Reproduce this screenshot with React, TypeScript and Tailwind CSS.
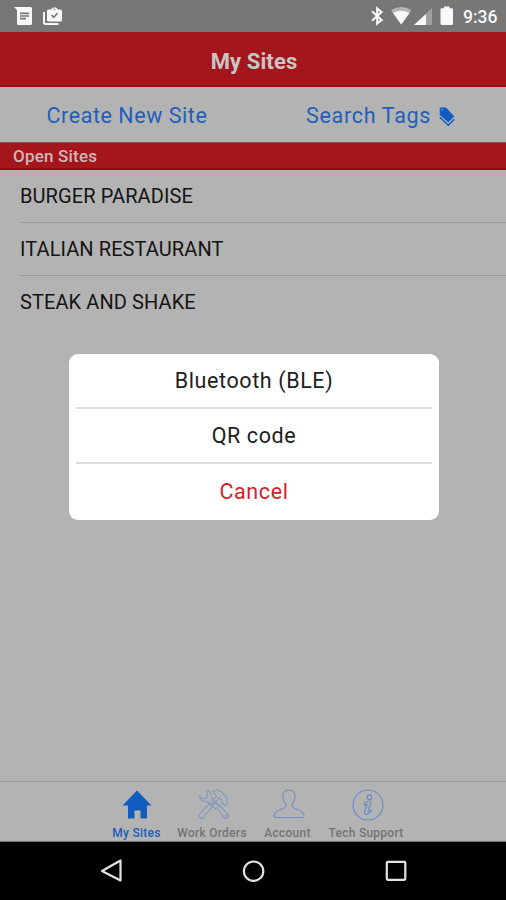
import React from "react";

const sites = ["BURGER PARADISE", "ITALIAN RESTAURANT", "STEAK AND SHAKE"];

function StatusBar() {
  return (
    <div className="flex h-8 shrink-0 items-start justify-between bg-[#777777] pl-[14px] pr-[8px] text-[#f8f8f8]">
      <div className="flex gap-[10px] pt-[6px]">
        <svg width="19" height="20" viewBox="0 0 19 20">
          <path fill="currentColor" d="M0 1h16.500q1.500 0 1.500 1.500v15q0 1.500-1.500 1.500H4.500Q3 19 3 17.500V4z" />
          <path stroke="#777" strokeWidth="1.700" d="M6 7.300h9M6 10h9M6 12.700h6" />
        </svg>
        <svg width="20" height="20" viewBox="0 0 20 20">
          <path fill="none" stroke="currentColor" strokeWidth="2" d="M1 6v10.500q0 1.500 1.500 1.500H15.500" />
          <path fill="currentColor" d="M4 5q0-1.500 1.500-1.500H8L10 1.500h3L15 3.500h2.500Q19 3.500 19 5v9q0 1.500-1.500 1.500h-12Q4 15.500 4 14z" />
          <path fill="none" stroke="#777" strokeWidth="1.500" d="m8.500 9 2.300 2.300 3.700-4.200" />
          <path fill="#777" d="M10.500 2.800h2v1h-2z" />
        </svg>
      </div>
      <div className="flex">
        <svg width="82" height="20" viewBox="0 0 82 20" className="mt-[6px]">
          <path fill="none" stroke="currentColor" strokeWidth="2.200" d="M1 5.300 10.500 14 6.200 17.400V2.600L10.500 6 1 14.700" />
          <path fill="#b4b4b4" d="M20 4q10.500-6 20.500 0L30.200 18.500z" />
          <path fill="currentColor" d="M22 7q8.300-4.500 16.500 0l-8.300 11.500z" />
          <path fill="#a0a0a0" d="M61 2v17H43z" />
          <path fill="currentColor" d="M55 8v11H43z" />
          <path fill="currentColor" d="M70.500 2.200H73V.5h5.500v1.700H81q1 0 1 1.200v14.400q0 1.200-1 1.200H70.700q-1.200 0-1.200-1.200V3.400q0-1.200 1-1.200z" />
        </svg>
        <span className="ml-[10px] mt-[6px] w-[35px] whitespace-nowrap text-[17.500px] font-medium leading-[22px]">9:36</span>
      </div>
    </div>
  );
}

function TagsIcon() {
  return (
    <svg width="16" height="20" viewBox="0 0 16 20" className="ml-[8px] mt-[1px]">
      <path fill="#125cc0" fillRule="evenodd" d="M.7.500h6.300L15.300 9.500l-6 6L.7 8zM3 2a.8.800 0 1 0 0 1.600.8.800 0 0 0 0-1.600z" />
      <path fill="none" stroke="#125cc0" strokeWidth="1.400" d="m.8 10.300 8.500 8 6-6" />
    </svg>
  );
}

function TabIcon({ name }: { name: string }) {
  if (name === "My Sites")
    return (
      <svg width="30" height="30" viewBox="0 0 30 30">
        <path fill="#125cc0" d="M15 .5 29.500 15.500H25v13h-6.500v-8h-6v8H6v-13H.5z" />
      </svg>
    );
  if (name === "Work Orders")
    return (
      <svg width="32" height="32" viewBox="0 0 32 32" fill="none" stroke="#8097c0" strokeWidth="1.100">
        <path d="M8 1.500c4 0 6 3 5 6.500l4 4.500-4 4-4.500-4.500C5 13 1.500 11 1.500 7l4 3 3.500-1 .5-3.500z" />
        <path d="m18.500 18 8 11q1 1 2.300 0l1.200-1.200q1-1.100 0-2.300l-9-9.500" />
        <path d="M15 2.500Q19-.5 23 2.500l6 6.500v6l-2 2-3-3v-3l-3-2L5 29q-1 1-2 0l-1.700-1.700q-1-1 0-2L18.500 7.500z" />
        <path d="m13.500 16.500 5 4M17 13l4 4M27 26l1.500 1.500" />
      </svg>
    );
  if (name === "Account")
    return (
      <svg width="32" height="30" viewBox="0 0 32 30" fill="none" stroke="#718fc4" strokeWidth="1.100">
        <path d="M16 1c-4.200 0-6.500 3-6.200 7 .2 4 2 5.500 3 7 .8 3-.8 4-4.800 5.200C3 22 1 23.500 1 27q0 1.500 1.500 1.500h27Q31 28.500 31 27c0-3.500-2-5-7-6.800-4-1.200-5.600-2.200-4.800-5.200 1-1.500 2.800-3 3-7 .3-4-2-7-6.200-7z" />
      </svg>
    );
  return (
    <svg width="32" height="32" viewBox="0 0 32 32" fill="none" stroke="#668bc5" strokeWidth="1.100">
      <circle cx="16" cy="16" r="15" />
      <circle cx="17.500" cy="8.200" r="2.300" />
      <path d="M12.200 14.500q3-3 5.800-2.500c1.500.500 1 2-.5 6l-1.500 4.500q2-.5 2.800-1.500l.5.800Q16.500 26 13.500 25.500c-2-.500-1-3 .2-6l1.500-4.300q-1.500.300-2.500 1.200z" />
    </svg>
  );
}

const tabs = [
  { name: "My Sites", box: "w-[48px] ml-[112.500px]", icon: "mt-[8px] h-[33px] pl-[1px]", text: "text-[#1c5dba]" },
  { name: "Work Orders", box: "w-[70px] ml-[16.500px]", icon: "mt-[7px] h-[34px] pl-[3px]", text: "text-[#747474]" },
  { name: "Account", box: "w-[47px] ml-[17px]", icon: "mt-[7px] h-[34px] pl-[2px]", text: "text-[#747474]" },
  { name: "Tech Support", box: "w-[76px] ml-[17px]", icon: "mt-[7px] h-[34px] pl-[3px]", text: "text-[#747474]" },
];

const options = [
  { label: "Bluetooth (BLE)", style: "h-[55px] border-b-2 text-[#202020]" },
  { label: "QR code", style: "h-[55px] border-b-2 text-[#202020]" },
  { label: "Cancel", style: "h-[56px] text-[#d4212b]" },
];

export default function App() {
  return (
    <div className="relative flex h-[900px] w-[506px] flex-col overflow-hidden bg-[#b3b3b3] font-['Roboto',sans-serif]">
      <StatusBar />
      <header className="flex h-[55px] shrink-0 items-center justify-center border-b-2 border-[#98060e] bg-[#a3161b] pt-[6px] text-[22px] font-bold tracking-[0.100px] text-[#cac5c5]">
        <h1 className="pl-[2px]">My Sites</h1>
      </header>
      <div className="flex h-[55px] shrink-0 text-[21.500px] leading-[28px] tracking-[0.550px] text-[#1f5fb9]">
        <button className="ml-[46.500px] mt-[15px] h-7 w-[162.500px] whitespace-nowrap text-left">Create New Site</button>
        <button className="ml-[97px] mt-[15px] flex h-7 items-center whitespace-nowrap tracking-[0.700px]">
          Search Tags
          <TagsIcon />
        </button>
      </div>
      <div className="h-[28px] shrink-0 border-b-2 border-t border-b-[#99060c] border-t-[#8f5558] bg-[#a3161b] pl-[13px] pt-[2px] text-[17px] font-medium leading-[22px] tracking-[0.200px] text-[#d0b6b7]">
        Open Sites
      </div>
      <ul className="flex-1 pl-5 text-[20px] tracking-[0.090px] text-[#141414]">
        {sites.map((site, i) => (
          <li key={site} className={i < 2 ? "flex h-[53px] items-center border-b border-[#999999]" : "flex h-[51px] items-center"}>
            {site}
          </li>
        ))}
      </ul>
      <nav className="flex h-[61px] shrink-0 border-b border-t border-b-[#707070] border-t-[#999999]">
        {tabs.map((tab) => (
          <div key={tab.name} className={`flex shrink-0 flex-col items-center ${tab.box}`}>
            <div className={`shrink-0 ${tab.icon}`}>
              <TabIcon name={tab.name} />
            </div>
            <span className={`mt-[2px] whitespace-nowrap text-[12px] font-medium leading-[16px] tracking-[0.250px] ${tab.text}`}>{tab.name}</span>
          </div>
        ))}
      </nav>
      <div className="flex h-[58px] shrink-0 items-start bg-black pl-[100px] pt-[17px]">
        <svg width="24" height="24" viewBox="0 0 24 24" fill="none" stroke="#e4e4e4" strokeWidth="2.200">
          <path strokeLinejoin="round" d="M2 12 20.500 1.500v20z" />
        </svg>
        <svg width="24" height="24" viewBox="0 0 24 24" fill="none" stroke="#e4e4e4" strokeWidth="2.200" className="ml-[118px]">
          <circle cx="11.600" cy="12.200" r="9.700" />
        </svg>
        <svg width="24" height="24" viewBox="0 0 24 24" fill="none" stroke="#e4e4e4" strokeWidth="2.200" className="ml-[118px]">
          <rect x="2.800" y="2.800" width="18.500" height="18" rx="1" />
        </svg>
      </div>
      <div role="dialog" className="absolute left-[69px] top-[354px] flex h-[166px] w-[370px] flex-col rounded-[9px] bg-white px-[7px]">
        {options.map((o) => (
          <button key={o.label} className={`block border-[#dedede] text-center text-[21.500px] leading-[26px] tracking-[0.600px] ${o.style}`}>
            {o.label}
          </button>
        ))}
      </div>
    </div>
  );
}
